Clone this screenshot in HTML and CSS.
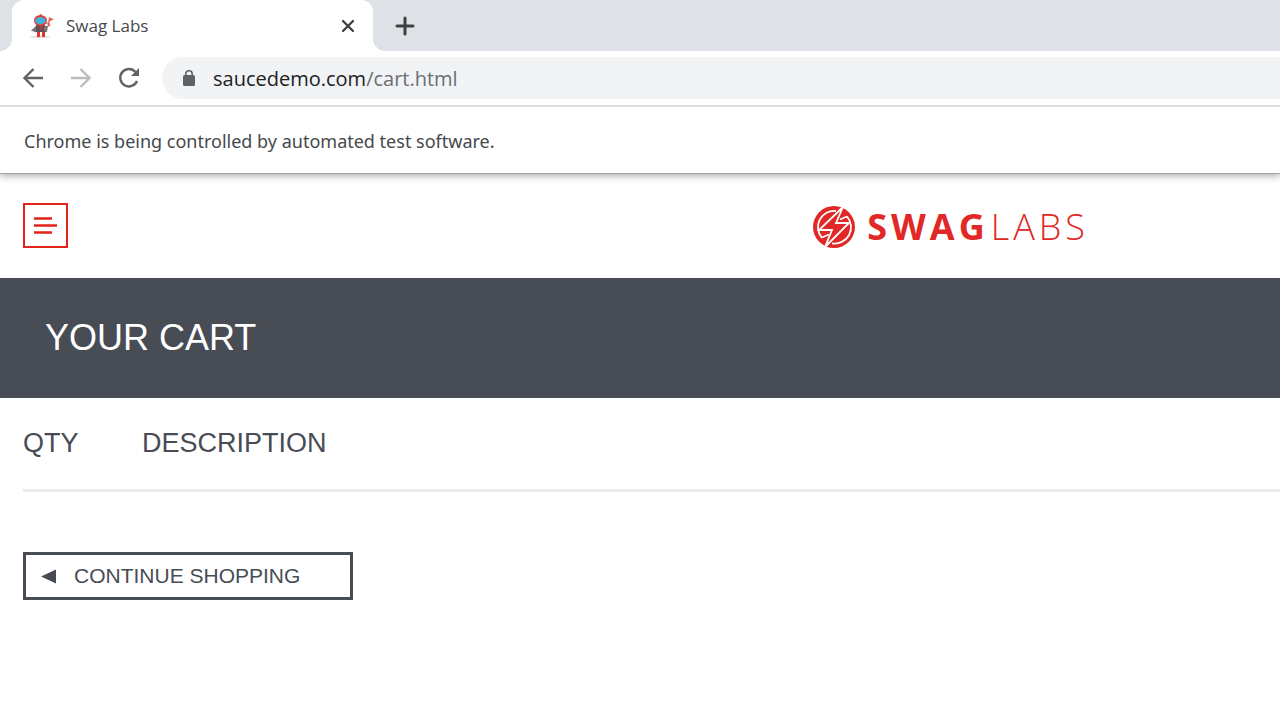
FILE: index.html
```html
<!DOCTYPE html>
<html lang="en">
<head>
<meta charset="utf-8">
<title>Swag Labs</title>
<link rel="stylesheet" href="styles.css">
</head>
<body>
<div class="browser">
  <div class="tab-strip">
    <div class="tab">
      <svg class="favicon" viewBox="0 0 24 26" aria-hidden="true">
        <ellipse cx="10" cy="24" rx="10" ry="1" fill="#dcdcdc"/>
        <path d="M10.500 1v3" stroke="#e0443e" stroke-width="1.500"/>
        <path d="M7 18h3v6H7zM12 18h3v6h-3z" fill="#e2342f"/>
        <path d="M6 12h9l1.500 7H5z" fill="#57545a"/>
        <path d="M6 13l-5 4.500 5 2zM14 13h4l-1 6-3-1z" fill="#77747a"/>
        <path d="M9.500 12h3v5h-3z" fill="#b83c3a"/>
        <ellipse cx="10.500" cy="7.500" rx="6.500" ry="5.500" fill="#dc403b"/>
        <ellipse cx="10.500" cy="7.700" rx="5.200" ry="3.700" fill="#42b2dc"/>
        <path d="M19 4l5 2.500-5 2z" fill="#e8605b"/>
        <path d="M19.500 5l-1.500 8M16 10.500l3-1 .5 3-2.500 1" fill="none" stroke="#e8605b" stroke-width="1.200"/>
      </svg>
      <span class="tab-title">Swag Labs</span>
      <button class="icon-button" type="button" aria-label="Close tab">
        <svg width="14" height="14" viewBox="0 0 14 14"><path d="M2 2l10 10M12 2L2 12" stroke="#3c4043" stroke-width="2.300" stroke-linecap="round"/></svg>
      </button>
    </div>
    <button class="icon-button new-tab" type="button" aria-label="New tab">
      <svg width="20" height="20" viewBox="0 0 20 20"><path d="M10 2v16M2 10h16" stroke="#3c4043" stroke-width="3" stroke-linecap="round"/></svg>
    </button>
  </div>
  <div class="toolbar">
    <button class="icon-button" type="button" aria-label="Back">
      <svg width="24" height="24" viewBox="0 0 24 24" fill="none" stroke="#5f6368" stroke-width="2.400"><path d="M22 12H4M12.500 3L3.500 12l9 9"/></svg>
    </button>
    <button class="icon-button" type="button" aria-label="Forward">
      <svg width="24" height="24" viewBox="0 0 24 24" fill="none" stroke="#babcbe" stroke-width="2.400"><path d="M2 12h18M11.500 3l9 9-9 9"/></svg>
    </button>
    <button class="icon-button" type="button" aria-label="Reload">
      <svg width="24" height="24" viewBox="0 0 24 24"><path d="M20 15a8.700 8.700 0 1 1-1.500-9" fill="none" stroke="#5f6368" stroke-width="2.400"/><path d="M22 2v8h-8z" fill="#5f6368"/></svg>
    </button>
    <div class="address">
      <svg width="14" height="18" viewBox="0 0 14 18" aria-hidden="true"><path d="M3.800 8V5a3.200 3.200 0 0 1 6.400 0v3" fill="none" stroke="#5f6368" stroke-width="1.600"/><rect x="1" y="6" width="12" height="11" rx="1.500" fill="#5f6368"/></svg>
      <span class="url">saucedemo.com<span class="url-path">/cart.html</span></span>
    </div>
  </div>
  <div class="infobar">Chrome is being controlled by automated test software.</div>
</div>
<header class="header">
  <button class="menu-button" type="button" aria-label="Open menu">
    <svg width="24" height="18" viewBox="0 0 24 18"><path d="M0 1.500h18M0 8.500h23M0 15.500h18" stroke="#e2231a" stroke-width="2.400"/></svg>
  </button>
  <div class="logo">
    <svg width="42" height="42" viewBox="0 0 42 42" aria-hidden="true">
      <circle cx="21" cy="21" r="21" fill="#e12826"/>
      <path d="M23 5A16.300 16.300 0 0 0 9 32M34 10.500A16.300 16.300 0 0 1 19 37.300" fill="none" stroke="#fff" stroke-width="1.800"/>
      <path d="M30 1L6 24h13L12 41 36 17H23L30 1z" fill="#e12826" stroke="#fff" stroke-width="1.800"/>
      <path d="M9 31.500l7-3M34 10.500l-7 3" stroke="#fff" stroke-width="1.800"/>
    </svg>
    <span class="wordmark"><b>SWAG</b><span class="light">LABS</span></span>
  </div>
</header>
<h1 class="title">YOUR CART</h1>
<main class="cart">
  <table class="cart-table">
    <thead><tr><th class="qty" scope="col">QTY</th><th scope="col">DESCRIPTION</th></tr></thead>
  </table>
  <a class="continue" href="#">
    <svg width="16" height="16" viewBox="0 0 16 16" aria-hidden="true"><path d="M0 8.500L15 1.500v14z" fill="#484c55"/></svg>
    <span>CONTINUE SHOPPING</span>
  </a>
</main>
</body>
</html>
```
FILE: styles.css
```css
* { box-sizing: border-box; }
body {
  margin: 0;
  background: #fff;
  color: #484c55;
  font-family: "Liberation Sans", Arial, sans-serif;
}
svg { display: block; flex: none; }
.icon-button {
  display: flex;
  padding: 0;
  border: 0;
  background: none;
}
.browser {
  font-family: "Open Sans", "Noto Sans", sans-serif;
  border-bottom: 1px solid #a3a6a6;
  box-shadow: 0 1px 8px rgba(0, 0, 0, 0.4);
}
.tab-strip {
  display: flex;
  align-items: center;
  height: 51px;
  padding-left: 12px;
  background: #dee1e6;
}
.tab {
  position: relative;
  display: flex;
  align-items: center;
  gap: 12px;
  width: 361px;
  height: 51px;
  padding: 0 18px;
  border-radius: 12px 12px 0 0;
  background: #fff;
}
.tab::before,
.tab::after {
  content: "";
  position: absolute;
  bottom: 0;
  width: 12px;
  height: 12px;
}
.tab::before {
  right: 100%;
  background: radial-gradient(circle at 0 0, #dee1e6 12px, #fff 12px);
}
.tab::after {
  left: 100%;
  background: radial-gradient(circle at 100% 0, #dee1e6 12px, #fff 12px);
}
.favicon { width: 24px; height: 26px; }
.tab-title {
  flex: 1;
  color: #45494d;
  font-size: 17px;
}
.new-tab { margin-left: 22px; }
.toolbar {
  display: flex;
  align-items: center;
  gap: 24px;
  height: 56px;
  padding-left: 21px;
  border-bottom: 2px solid #dadce0;
}
.address {
  display: flex;
  flex: 1;
  align-items: center;
  gap: 17px;
  height: 42px;
  margin-left: -3px;
  padding-left: 20px;
  border-radius: 21px 0 0 21px;
  background: #f1f3f4;
}
.url {
  color: #202124;
  font-size: 20px;
}
.url-path { color: #6b6f73; }
.infobar {
  padding: 21px 24px 19px;
  color: #45494d;
  font-family: "Noto Sans", sans-serif;
  font-size: 18px;
  line-height: 26px;
}
.header {
  display: flex;
  align-items: center;
  height: 104px;
  padding: 0 191px 1px 23px;
}
.menu-button {
  display: flex;
  align-items: center;
  width: 45px;
  height: 45px;
  padding: 0 0 0 9px;
  border: 2px solid #e2231a;
  background: #fff;
}
.logo {
  display: flex;
  align-items: center;
  gap: 12px;
  margin-left: auto;
  padding-top: 2px;
}
.wordmark {
  display: flex;
  gap: 2px;
  color: #e12826;
  font-family: "Open Sans", sans-serif;
  font-size: 36px;
  line-height: 42px;
  letter-spacing: 4px;
}
.light { font-weight: 300; }
.title {
  margin: 0;
  padding: 39px 45px;
  background: #484c55;
  color: #fff;
  font-size: 36px;
  font-weight: 400;
  line-height: 42px;
}
.cart { padding-left: 23px; }
.cart-table {
  width: 100%;
  border-collapse: collapse;
}
.cart-table th {
  padding: 29px 0 30px;
  border-bottom: 3px solid #ebebeb;
  font-size: 27px;
  font-weight: 400;
  line-height: 32px;
  text-align: left;
}
.cart-table .qty { width: 119px; }
.continue {
  display: flex;
  align-items: center;
  gap: 17px;
  width: 330px;
  height: 48px;
  margin-top: 60px;
  padding: 0 15px;
  border: 3px solid #484c55;
  color: #484c55;
  font-size: 21px;
  text-decoration: none;
}
```
